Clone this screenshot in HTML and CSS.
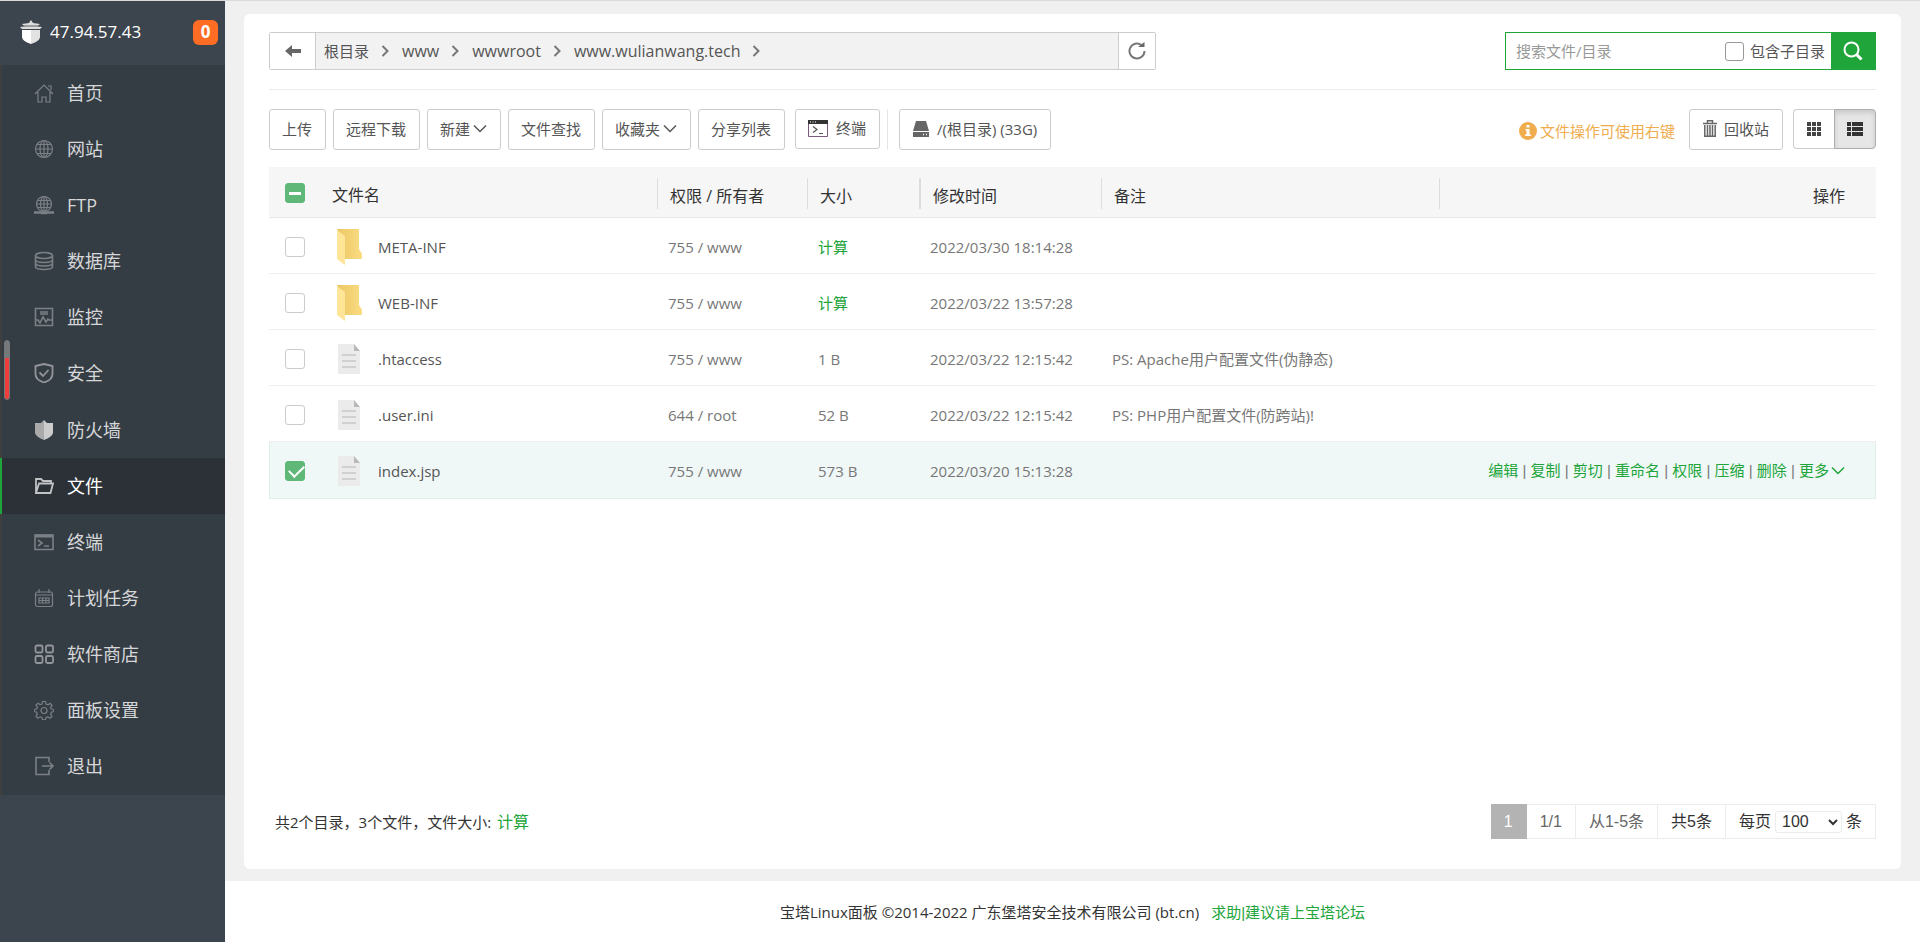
FILE: index.html
```html
<!DOCTYPE html>
<html lang="zh-CN">
<head>
  <meta charset="UTF-8">
  <title>文件 - 宝塔Linux面板</title>
  <link rel="stylesheet" href="styles.css">
</head>
<body>

<svg class="defs" aria-hidden="true">
  <linearGradient id="fold" x1="0" x2="1"><stop offset="0" stop-color="#eac765"/><stop offset="1" stop-color="#fbdc82"/></linearGradient>
  <symbol id="folder" viewBox="0 0 26 36">
    <path d="M1 0h22v20l3 5v5H8z" fill="url(#fold)"/>
    <path d="M1 1l8 6v29l-8-6z" fill="#ffe597"/>
  </symbol>
  <symbol id="file" viewBox="0 0 26 36">
    <path d="M2 3h16l6 7v23H2z" fill="#ebebeb"/>
    <path d="M18 3l6 7h-6z" fill="#b9b9b9"/>
    <path d="M6 14h14M6 20h14M6 26h14" stroke="#d0d0d0" stroke-width="2"/>
  </symbol>
  <symbol id="down" viewBox="0 0 14 10"><path d="M1 1.5l6 6 6-6" fill="none" stroke="currentColor" stroke-width="1.5"/></symbol>
  <symbol id="right" viewBox="0 0 8 12"><path d="M1.5 1l5 5-5 5" fill="none" stroke="#777" stroke-width="2"/></symbol>
</svg>

<div class="layout">
  <aside class="sidebar">
    <div class="server">
      <svg width="22" height="24" viewBox="0 0 22 24"><path d="M11 0l2 3 7 1-2 2H4L2 4l7-1zM0 7l11-2 11 2-2 2H2z" fill="#ddd"/><path d="M2 10h9v14q-9-3-9-7z" fill="#fff"/><path d="M11 10h9v7q0 4-9 7z" fill="#e2e2e2"/><path d="M2 6h18M2 9.500h18" stroke="#3c444d" stroke-width=".8"/></svg>
      <span class="ip">47.94.57.43</span>
      <span class="badge">0</span>
    </div>
    <nav class="menu">
      <a href="#"><svg viewBox="0 0 20 20"><path d="M1 11l9-9 9 9M4 9v10h4v-5h4v5h4V9M14 3h3v4"/></svg>首页</a>
      <a href="#"><svg viewBox="0 0 20 20"><circle cx="10" cy="10" r="8.500"/><ellipse cx="10" cy="10" rx="4" ry="8.500"/><path d="M10 1v18M2 10h16M3 5.500h14M3 14.500h14"/></svg>网站</a>
      <a href="#"><svg viewBox="0 0 20 20"><circle cx="10" cy="9" r="7.500"/><ellipse cx="10" cy="9" rx="3.500" ry="7.500"/><path d="M10 2v14M3 9h14M4 5.500h12M4 12.500h12"/><path d="M0 17.500h20M7 18h6" stroke-width="2.500"/></svg>FTP</a>
      <a href="#"><svg class="mid" viewBox="0 0 20 20"><ellipse cx="10" cy="4.500" rx="8.500" ry="3"/><path d="M1.500 4.500v11c0 4 17 4 17 0v-11M1.500 8.500c0 4 17 4 17 0M1.500 12c0 4 17 4 17 0"/></svg>数据库</a>
      <a href="#"><svg class="mid" viewBox="0 0 20 20"><path d="M1.500 1.500h17v17h-17zM6 5h8M6 7h8M2 13h2l2 3 3-6 3 5 2-3 1 1h3"/></svg>监控</a>
      <a href="#"><svg class="strong" viewBox="0 0 20 20"><path d="M10 1l8.500 2v8q0 6-8.500 8.500Q1.500 17 1.500 11V3zM5.500 9.500l3.500 3.500 5.500-6"/></svg>安全</a>
      <a href="#"><svg viewBox="0 0 20 20"><path d="M10 0L7 3 1 3v10q1 4 9 7z" fill="#aaa" stroke="none"/><path d="M10 0l3 3 6 0v10q-1 4-9 7z" fill="#ccc" stroke="none"/></svg>防火墙</a>
      <a href="#" class="active"><svg class="strong" viewBox="0 0 20 20"><path d="M2 17V3h5l2 2h8v2.500M2 17L5 7.500h14L16.500 17z"/></svg>文件</a>
      <a href="#"><svg class="mid" viewBox="0 0 20 20"><path d="M1 3h18v14.500H1zM4 8l4 3-4 3M10 14h5"/><path d="M1 4h18" stroke-width="3"/></svg>终端</a>
      <a href="#"><svg viewBox="0 0 20 20"><rect x="1.500" y="4" width="17" height="14.500" rx="2"/><path d="M2 7h16M5 1v4M15 1v4M5 10h10v5H5zM5 12.500h10M8.500 10v5M12 10v5"/></svg>计划任务</a>
      <a href="#"><svg class="strong" viewBox="0 0 20 20"><rect x="1.500" y="1.500" width="7" height="7" rx="1.500"/><rect x="12" y="1.500" width="7" height="7" rx="1.500"/><rect x="1.500" y="12" width="7" height="7" rx="1.500"/><rect x="12" y="12" width="7" height="7" rx="1.500"/></svg>软件商店</a>
      <a href="#"><svg viewBox="0 0 20 20"><path d="M8.500 1.500h3l.5 2.500 2 .8 2.200-1.400 1.800 2-1.400 2.200.8 1.400 2.400.5v2l-2.400.7-.8 2 1.400 2.200-2 1.800-2.200-1.400-1.800.8-.5 2.200h-3l-.5-2.200-2-.8-2.200 1.400-1.800-2 1.400-2-.8-2-2.400-.7v-2L2.600 9l.8-1.800L2 5l2-1.800 2 1.400L8 4z"/><circle cx="10" cy="10.500" r="3"/></svg>面板设置</a>
      <a href="#"><svg class="mid" viewBox="0 0 20 20"><path d="M15 6V1.500H2v17h13V14M8 10h11M15.500 6.500L19 10l-3.500 3.500"/></svg>退出</a>
    </nav>
    <div class="load-mark"></div>
  </aside>

  <div class="page">
    <main class="panel">
      <div class="path-row">
        <div class="path">
          <button class="back" aria-label="返回"><svg width="16" height="14" viewBox="0 0 16 14"><path d="M0 7l7-6v4h9v4H7v4z" fill="#666"/></svg></button>
          <div class="crumbs">
            <a href="#" class="root">根目录</a><svg><use href="#right"/></svg>
            <a href="#">www</a><svg><use href="#right"/></svg>
            <a href="#">wwwroot</a><svg><use href="#right"/></svg>
            <a href="#">www.wulianwang.tech</a><svg><use href="#right"/></svg>
          </div>
          <button class="refresh" aria-label="刷新"><svg width="18" height="18" viewBox="0 0 18 18"><path d="M16.500 9a7.500 7.500 0 1 1-3-6" fill="none" stroke="#777" stroke-width="2"/><path d="M10 5h6.500V0z" fill="#666"/></svg></button>
        </div>
        <form class="search">
          <input class="search-text" type="text" placeholder="搜索文件/目录" aria-label="搜索文件/目录">
          <input class="check small" type="checkbox" id="sub"><label for="sub">包含子目录</label>
          <button type="button" aria-label="搜索"><svg width="20" height="20" viewBox="0 0 20 20"><circle cx="8.500" cy="8.500" r="7" fill="none" stroke="#fff" stroke-width="2"/><path d="M13.500 13.500l5 5" stroke="#fff" stroke-width="3"/></svg></button>
        </form>
      </div>

      <div class="toolbar">
        <button class="btn">上传</button>
        <button class="btn">远程下载</button>
        <button class="btn">新建<svg class="arrow"><use href="#down"/></svg></button>
        <button class="btn">文件查找</button>
        <button class="btn">收藏夹<svg class="arrow"><use href="#down"/></svg></button>
        <button class="btn">分享列表</button>
        <button class="btn term"><svg width="20" height="17" viewBox="0 0 20 17"><path d="M.5.500h19v16H.5z" fill="#fff" stroke="#7a5c7a"/><path d="M0 0h20v4H0z" fill="#333"/><path d="M2 2h1M4.500 2h1M7 2h1" stroke="#fff"/><path d="M5 6.500L9 9.500l-4 3M11 13.500h4" fill="none" stroke="#555" stroke-width="1.200"/></svg>终端</button>
        <div class="disk">
          <button class="btn"><svg width="16" height="16" viewBox="0 0 16 16"><path d="M3 0h10l3 10H0zM0 11h16v5H0z" fill="#666"/><path d="M10 13.500h1M13 13.500h1" stroke="#fff" stroke-width="1.500"/></svg>/(根目录) (33G)</button>
        </div>
        <div class="tools-right">
          <span class="tip"><svg width="18" height="18" viewBox="0 0 18 18"><circle cx="9" cy="9" r="9" fill="#f0ad4e"/><path d="M7.500 3h3v2.500h-3zM6.500 7h4v5.500h1.500V14H6v-1.500h1.500v-4h-1z" fill="#fff"/></svg>文件操作可使用右键</span>
          <button class="btn trash"><svg width="14" height="17" viewBox="0 0 14 17"><path d="M0 3.500h14M4.500 3V.8h5V3" fill="none" stroke="#666" stroke-width="1.500"/><path d="M1.800 5v11.200h10.400V5M4.500 5v11M7 5v11M9.500 5v11" fill="none" stroke="#666" stroke-width="1.500"/></svg>回收站</button>
          <div class="views">
            <button aria-label="图标"><svg width="14" height="14" viewBox="0 0 14 14"><path d="M2 0v14M7 0v14M12 0v14" stroke="#444" stroke-width="4" stroke-dasharray="4 1"/></svg></button>
            <button class="on" aria-label="列表"><svg width="16" height="14" viewBox="0 0 16 14"><path d="M0 0h4v4H0zM5 0h11v4H5zM0 5h4v4H0zM5 5h11v4H5zM0 10h4v4H0zM5 10h11v4H5z" fill="#333"/></svg></button>
          </div>
        </div>
      </div>

      <table class="files">
        <colgroup><col class="c-check"><col class="c-name"><col class="c-perm"><col class="c-size"><col class="c-time"><col class="c-note"><col></colgroup>
        <thead>
          <tr>
            <th class="sel"><input class="check part" type="checkbox" aria-label="全选"></th>
            <th class="first">文件名</th>
            <th><span>权限 / 所有者</span></th>
            <th><span>大小</span></th>
            <th><span class="wide">修改时间</span></th>
            <th><span>备注</span></th>
            <th class="ops"><span>操作</span></th>
          </tr>
        </thead>
        <tbody>
          <tr>
            <td class="sel"><input class="check" type="checkbox" aria-label="META-INF"></td>
            <td><a href="#" class="name"><svg><use href="#folder"/></svg>META-INF</a></td>
            <td>755 / www</td><td><a href="#" class="green">计算</a></td><td>2022/03/30 18:14:28</td><td></td><td></td>
          </tr>
          <tr>
            <td class="sel"><input class="check" type="checkbox" aria-label="WEB-INF"></td>
            <td><a href="#" class="name"><svg><use href="#folder"/></svg>WEB-INF</a></td>
            <td>755 / www</td><td><a href="#" class="green">计算</a></td><td>2022/03/22 13:57:28</td><td></td><td></td>
          </tr>
          <tr>
            <td class="sel"><input class="check" type="checkbox" aria-label=".htaccess"></td>
            <td><a href="#" class="name"><svg><use href="#file"/></svg>.htaccess</a></td>
            <td>755 / www</td><td>1 B</td><td>2022/03/22 12:15:42</td><td>PS: Apache用户配置文件(伪静态)</td><td></td>
          </tr>
          <tr>
            <td class="sel"><input class="check" type="checkbox" aria-label=".user.ini"></td>
            <td><a href="#" class="name"><svg><use href="#file"/></svg>.user.ini</a></td>
            <td>644 / root</td><td>52 B</td><td>2022/03/22 12:15:42</td><td>PS: PHP用户配置文件(防跨站)!</td><td></td>
          </tr>
          <tr class="selected">
            <td class="sel"><input class="check" type="checkbox" aria-label="index.jsp" checked></td>
            <td><a href="#" class="name"><svg><use href="#file"/></svg>index.jsp</a></td>
            <td>755 / www</td><td>573 B</td><td>2022/03/20 15:13:28</td><td></td>
            <td class="ops"><a href="#">编辑</a> | <a href="#">复制</a> | <a href="#">剪切</a> | <a href="#">重命名</a> | <a href="#">权限</a> | <a href="#">压缩</a> | <a href="#">删除</a> | <a href="#">更多<svg class="arrow"><use href="#down"/></svg></a></td>
          </tr>
        </tbody>
      </table>

      <div class="bottom">
        <div class="summary">共2个目录，3个文件，文件大小: <a href="#" class="green">计算</a></div>
        <div class="pager">
          <span class="cur">1</span>
          <span>1/1</span>
          <span>从1-5条</span>
          <span class="dark">共5条</span>
          <label class="dark">每页<select><option>100</option><option>200</option><option>500</option></select>条</label>
        </div>
      </div>
    </main>
    <footer>宝塔Linux面板 ©2014-2022 广东堡塔安全技术有限公司 (bt.cn)<a href="#" class="green">求助|建议请上宝塔论坛</a></footer>
  </div>
</div>

</body>
</html>
```

FILE: styles.css
```css
* {
  box-sizing: border-box;
}

body {
  margin: 0;
  font-family: "Open Sans", "Noto Sans CJK SC", sans-serif;
  font-size: 15px;
  line-height: 20px;
  color: #333;
  background: #f0f0f0;
}

a {
  color: inherit;
  text-decoration: none;
}

button, input, select {
  font: inherit;
  color: inherit;
  margin: 0;
}

button {
  cursor: pointer;
  display: flex;
  align-items: center;
  justify-content: center;
}

svg {
  flex: none;
}

.defs {
  position: absolute;
  width: 0;
  height: 0;
}

.green {
  color: #20a53a;
}

.layout {
  display: flex;
  min-height: 100vh;
  border-top: 1px solid #dadada;
}

/* 左侧菜单 */
.sidebar {
  position: relative;
  flex: none;
  width: 225px;
  background: #3c444d;
}

.server {
  display: flex;
  align-items: center;
  height: 64px;
  padding: 0 7px 2px 20px;
  color: #fff;
}

.ip {
  margin-left: 8px;
  font-size: 17px;
}

.badge {
  margin-left: auto;
  width: 25px;
  height: 25px;
  border-radius: 6px;
  background: #ff6c24;
  font-size: 17px;
  font-weight: bold;
  line-height: 24px;
  text-align: center;
}

.menu {
  display: flex;
  flex-direction: column;
  height: 730px;
  background: #353d44;
}

.menu a {
  flex: 1;
  display: flex;
  align-items: center;
  padding-left: 32px;
  padding-bottom: 1px;
  border-left: 2px solid #403f40;
  font-size: 18px;
  color: #d6d7d9;
}

.menu svg {
  width: 20px;
  height: 20px;
  margin-right: 13px;
  fill: none;
  stroke: #7b8085;
  stroke-width: 1.2;
}

.menu svg.mid {
  stroke-width: 1.6;
}

.menu svg.strong {
  stroke: #92969a;
  stroke-width: 1.8;
}

.menu .active {
  background: #2c3138;
  border-color: #20a53a;
  color: #fff;
}

.menu .active svg {
  stroke: #c0c2c4;
}

.load-mark {
  position: absolute;
  left: 4px;
  top: 339px;
  width: 6px;
  height: 60px;
  border: 1px solid #75797c;
  border-radius: 3px;
  background: linear-gradient(#75797c 17px, #f03c3c 17px);
}

/* 右侧内容 */
.page {
  flex: 1;
  display: flex;
  flex-direction: column;
}

.panel {
  flex: 1;
  display: flex;
  flex-direction: column;
  margin: 13px 19px 12px;
  padding: 18px 25px 30px;
  border-radius: 6px;
  background: #fff;
}

.path-row {
  display: flex;
  justify-content: space-between;
  padding-bottom: 19px;
  border-bottom: 1px solid #ececec;
}

.path {
  display: flex;
  width: 887px;
  height: 38px;
  border: 1px solid #ccc;
  border-radius: 2px;
  background: #f2f2f2;
}

.path button {
  border: 0;
  background: #fff;
}

.path .back {
  width: 46px;
  border-right: 1px solid #ccc;
}

.path .refresh {
  width: 37px;
  border-left: 1px solid #ccc;
}

.crumbs {
  flex: 1;
  display: flex;
  align-items: center;
  padding-left: 8px;
  font-size: 16px;
  color: #555;
}

.crumbs .root {
  font-size: 15px;
}

.crumbs svg {
  width: 8px;
  height: 12px;
  margin: 0 13px 0 12px;
}

.search {
  display: flex;
  align-items: center;
  width: 371px;
  height: 38px;
  border: 1px solid #20a53a;
}

.search-text {
  flex: 1;
  min-width: 0;
  height: 36px;
  padding: 0 10px;
  border: 0;
  outline: none;
}

.search-text::placeholder {
  color: #999;
}

.search label {
  margin: 0 6px;
  color: #555;
}

.search button {
  width: 44px;
  height: 36px;
  border: 0;
  background: #20a53a;
}

.check {
  appearance: none;
  display: block;
  width: 20px;
  height: 20px;
  border: 1px solid #ccc;
  border-radius: 3px;
  background: #fff;
}

.check.small {
  width: 19px;
  height: 19px;
  border-color: #999;
}

.check.part,
.check:checked {
  position: relative;
  border-color: #5fb878;
  background: #5fb878;
}

.check.part::after {
  content: "";
  position: absolute;
  left: 3px;
  top: 8px;
  width: 12px;
  height: 3px;
  background: #fff;
}

.check:checked::after {
  content: "";
  position: absolute;
  left: 3px;
  top: 3px;
  width: 13px;
  height: 7px;
  border-left: 2px solid #fff;
  border-bottom: 2px solid #fff;
  transform: rotate(-45deg);
}

/* 工具栏 */
.toolbar {
  display: flex;
  gap: 7px;
  margin: 19px 0 17px;
}

.btn {
  height: 41px;
  padding: 0 13px 2px 12px;
  border: 1px solid #ccc;
  border-radius: 3px;
  background: #fff;
  color: #555;
  white-space: nowrap;
}

.arrow {
  width: 14px;
  height: 10px;
  margin-left: 3px;
}

.term {
  height: 40px;
  margin: 0 0 0 3px;
  gap: 8px;
}

.disk {
  padding-left: 11px;
  border-left: 1px solid #e6e6e6;
}

.disk .btn {
  gap: 8px;
  padding: 0 13px 2px;
}

.tools-right {
  display: flex;
  margin-left: auto;
}

.tip {
  display: flex;
  align-items: center;
  gap: 3px;
  margin-right: 14px;
  padding-top: 3px;
  color: #f0ad4e;
}

.trash {
  gap: 7px;
  padding: 0 13px 2px;
}

.views {
  display: flex;
  margin-left: 10px;
}

.views button {
  width: 41px;
  height: 40px;
  padding: 0;
  border: 1px solid #ccc;
  border-right: 0;
  border-radius: 4px 0 0 4px;
  background: #fff;
}

.views .on {
  width: 42px;
  border: 1px solid #adadad;
  border-radius: 0 4px 4px 0;
  background: #e6e6e6;
  box-shadow: inset 0 3px 5px rgba(0,0,0,0.125);
}

/* 文件列表 */
.files {
  width: 100%;
  table-layout: fixed;
  border-collapse: separate;
  border-spacing: 0;
}

.c-check { width: 51px; }
.c-name { width: 337px; }
.c-perm { width: 150px; }
.c-size { width: 112px; }
.c-time { width: 182px; }
.c-note { width: 338px; }

.files th {
  height: 51px;
  padding: 2px 0 0;
  background: #f6f6f6;
  border-bottom: 1px solid #e8e8e8;
  font-size: 16px;
  font-weight: normal;
  text-align: left;
}

.files th.first {
  padding: 6px 0 0 12px;
}

.files th span {
  display: block;
  height: 31px;
  padding-left: 12px;
  border-left: 1px solid #ddd;
  line-height: 36px;
}

.files th span.wide {
  border-left-width: 2px;
}

.files td {
  height: 56px;
  padding: 2px 0 0 11px;
  border-bottom: 1px solid #f0f0f0;
  color: #777;
}

.files .sel {
  padding-left: 16px;
}

.files .ops {
  text-align: right;
  white-space: nowrap;
}

.files td.ops {
  padding-right: 30px;
  font-family: "Liberation Sans", "Noto Sans CJK SC", sans-serif;
}

.files th.ops span {
  padding-right: 31px;
}

.ops a {
  color: #20a53a;
}

.ops .arrow {
  margin-left: 2px;
}

.files .selected td {
  height: 57px;
  background: #f0f8f7;
  border-bottom-color: #dfefea;
}

.selected td:first-child {
  border-left: 1px solid #dfefea;
}

.files .selected .sel {
  padding-left: 15px;
}

.selected td:last-child {
  border-right: 1px solid #dfefea;
}

.name {
  display: flex;
  align-items: center;
  gap: 16px;
  padding-left: 5px;
  color: #555;
}

.name svg {
  width: 26px;
  height: 36px;
}

/* 底部 */
.bottom {
  display: flex;
  justify-content: space-between;
  align-items: center;
  margin-top: auto;
  padding-left: 6px;
}

.summary a {
  margin-left: 2px;
  font-size: 16px;
}

.pager {
  display: flex;
  height: 35px;
  font-family: "Liberation Sans", "Noto Sans CJK SC", sans-serif;
  font-size: 16px;
  color: #666;
}

.pager > * {
  display: flex;
  align-items: center;
  padding: 0 13px;
  border: 1px solid #ececec;
  border-left: 0;
}

.pager .cur {
  border-color: #b3b3b3;
  background: #b3b3b3;
  color: #fff;
}

.pager .dark {
  color: #333;
}

.pager select {
  width: 67px;
  height: 22px;
  margin: 0 4px;
  padding: 0 2px;
  border: 1px solid #ececec;
  border-radius: 3px;
  background: #fff;
}

footer {
  height: 61px;
  line-height: 62px;
  background: #fff;
  text-align: center;
}

footer a {
  margin-left: 12px;
  font-family: "Liberation Sans", "Noto Sans CJK SC", sans-serif;
}
```
